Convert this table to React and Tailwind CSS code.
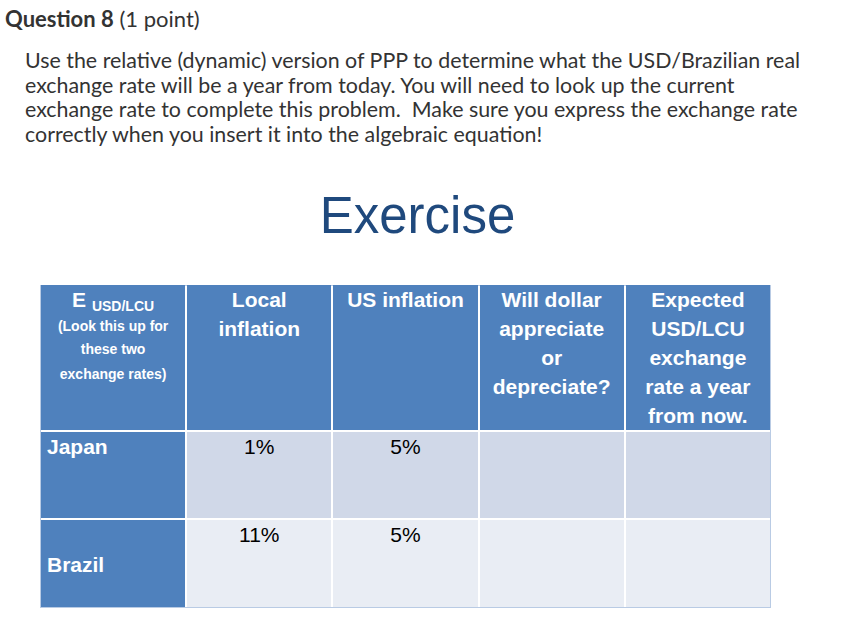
import React from "react";

export default function App() {
  const hdr = "bg-[#4f81bd] text-white font-bold text-[21px] leading-[29px] text-center -mt-[1px]";
  return (
    <div className="w-[845px] h-[621px] bg-white overflow-hidden">
      <div className="font-['Lato',sans-serif] text-[#333]">
        <div className="pt-[7px] pl-[5px] text-[22px] leading-[24px]">
          <span className="font-bold">Question 8</span> (1 point)
        </div>
        <p className="mt-[17px] ml-[25px] mr-[30px] text-[21.4px] leading-[24.5px]">
          Use the relative (dynamic) version of PPP to determine what the USD/Brazilian real exchange rate will be a year from today. You will need to look up the current exchange rate to complete this problem.&nbsp; Make sure you express the exchange rate correctly when you insert it into the algebraic equation!
        </p>
      </div>

      <div className="font-['Liberation_Sans',Arial,sans-serif]">
        <div className="mt-[45px] text-center text-[51px] leading-[50px] text-[#1f497d] pr-[10px]">
          Exercise
        </div>

        <div className="mt-[44px] ml-[40px] w-[731px] bg-white border border-[#b9cbe4]">
          <div className="grid grid-cols-5 gap-x-[2px] h-[143px]">
            <div className={`${hdr}`}>
              <div>
                E <span className="text-[14px] relative top-[4px]">USD/LCU</span>
              </div>
              <div className="text-[14px] leading-[23px] -mt-[2px]">(Look this up for</div>
              <div className="text-[14px] leading-[23px]">these two</div>
              <div className="text-[14px] leading-[23px] pt-[2px]">exchange rates)</div>
            </div>
            <div className={hdr}>
              Local
              <br />
              inflation
            </div>
            <div className={hdr}>US inflation</div>
            <div className={hdr}>
              Will dollar
              <br />
              appreciate
              <br />
              or
              <br />
              depreciate?
            </div>
            <div className={hdr}>
              Expected
              <br />
              USD/LCU
              <br />
              exchange
              <br />
              rate a year
              <br />
              from now.
            </div>
          </div>

          <div className="grid grid-cols-5 gap-x-[2px] h-[86px] mt-[3px] text-[21px] leading-[29px]">
            <div className="bg-[#4f81bd] text-white font-bold pl-[6px]">Japan</div>
            <div className="bg-[#d0d8e8] text-black text-center">1%</div>
            <div className="bg-[#d0d8e8] text-black text-center">5%</div>
            <div className="bg-[#d0d8e8]"></div>
            <div className="bg-[#d0d8e8]"></div>
          </div>

          <div className="grid grid-cols-5 gap-x-[2px] h-[87px] mt-[2px] text-[21px] leading-[29px]">
            <div className="bg-[#4f81bd] text-white font-bold pl-[6px] flex items-center pt-[1px]">Brazil</div>
            <div className="bg-[#e9edf4] text-black text-center">11%</div>
            <div className="bg-[#e9edf4] text-black text-center">5%</div>
            <div className="bg-[#e9edf4]"></div>
            <div className="bg-[#e9edf4]"></div>
          </div>
        </div>
      </div>
    </div>
  );
}
